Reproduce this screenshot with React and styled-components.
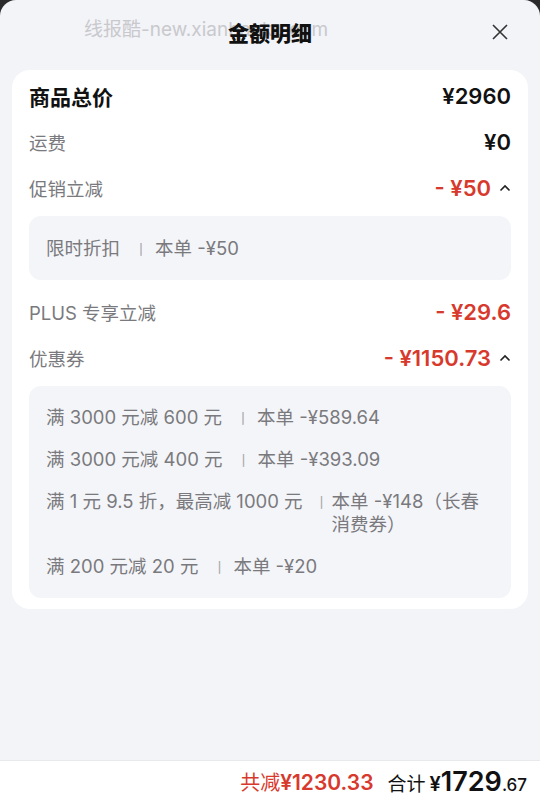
import React from "react";
import styled, { createGlobalStyle } from "styled-components";

const GlobalStyle = createGlobalStyle`
  html, body {
    margin: 0;
    padding: 0;
    background: #2a2a2c;
  }
  body {
    font-family: Inter, "Noto Sans CJK SC", sans-serif;
  }
`;

const RED = "#d8392d";

const Sheet = styled.div`
  position: relative;
  height: 802px;
  display: flex;
  flex-direction: column;
  background: #f3f4f8;
  border-radius: 16px 16px 0 0;
  overflow: hidden;
`;

const Header = styled.div`
  position: relative;
  height: 70px;
  display: flex;
  align-items: flex-start;
  justify-content: center;
  padding-top: 17px;
  box-sizing: border-box;
`;

const Watermark = styled.div`
  position: absolute;
  left: 84px;
  top: 14px;
  font-size: 19px;
  color: #c9c9cd;
  white-space: nowrap;
`;

const Title = styled.h1`
  position: relative;
  margin: 0;
  font-size: 21px;
  line-height: 34px;
  font-weight: 800;
  color: #111;
`;

const CloseButton = styled.button`
  position: absolute;
  right: 30px;
  top: 22px;
  width: 20px;
  height: 20px;
  padding: 0;
  border: none;
  background: transparent;
  display: flex;
  align-items: center;
  justify-content: center;
`;

const Card = styled.div`
  margin: 0 12px;
  background: #fff;
  border-radius: 18px;
  padding: 3px 17px 11px;
`;

const Row = styled.div`
  height: 46px;
  display: flex;
  align-items: center;
  justify-content: space-between;
`;

const Label = styled.span`
  font-size: ${(p) => (p.strong ? "21px" : "18.5px")};
  font-weight: ${(p) => (p.strong ? 700 : 400)};
  color: ${(p) => (p.strong ? "#111" : "#7a7a7e")};
`;

const Amount = styled.span`
  display: flex;
  align-items: center;
  gap: 8px;
  font-size: 22px;
  font-weight: 600;
  color: ${(p) => (p.red ? RED : "#111")};
`;

const Detail = styled.div`
  margin: 5px 0 9px;
  background: #f4f5f8;
  border-radius: 12px;
  padding: ${(p) => (p.multi ? "20px 17px 20px" : "21px 17px 20px")};
  display: flex;
  flex-direction: column;
  gap: 19px;

  &:last-child {
    margin-bottom: 0;
  }
`;

const DetailLine = styled.div`
  display: flex;
  align-items: flex-start;
  font-size: 18.5px;
  line-height: 23px;
  color: #7a7a7e;
`;

const DetailName = styled.span`
  white-space: nowrap;
`;

const Sep = styled.span`
  margin: 0 ${(p) => (p.tight ? "3px" : "7px")} 0 ${(p) => (p.tight ? "12px" : "14px")};
  color: #a8a8ad;
  font-size: 14px;
`;

const DetailValue = styled.span`
  flex: 1;
`;

const Footer = styled.div`
  margin-top: auto;
  height: 41px;
  background: #fff;
  border-top: 1px solid #e8e9ec;
  display: flex;
  align-items: center;
  justify-content: flex-end;
  padding-right: 13px;
  gap: 14px;
`;

const Saved = styled.span`
  font-size: 20px;
  color: ${RED};
`;

const SavedNum = styled.span`
  font-size: 21px;
  font-weight: 600;
`;

const Total = styled.span`
  display: flex;
  align-items: baseline;
  color: #111;
  font-size: 19px;
`;

const Yen = styled.span`
  margin-left: 4px;
  font-size: 20px;
  font-weight: 600;
`;

const TotalBig = styled.span`
  font-size: 27px;
  font-weight: 600;
`;

const TotalSmall = styled.span`
  font-size: 17px;
  font-weight: 500;
`;

const Chevron = () => (
  <svg width="12" height="8" viewBox="0 0 12 8">
    <path d="M1.5 6.5 L6 2 L10.5 6.5" fill="none" stroke="#222" strokeWidth="1.6" />
  </svg>
);

const coupons = [
  ["满 3000 元减 600 元", "本单 -¥589.64"],
  ["满 3000 元减 400 元", "本单 -¥393.09"],
  ["满 1 元 9.5 折，最高减 1000 元", "本单 -¥148（长春消费券）", true],
  ["满 200 元减 20 元", "本单 -¥20"],
];

export default function App() {
  return (
    <>
      <GlobalStyle />
      <Sheet>
        <Header>
          <Watermark>线报酷-new.xianbaoku.com</Watermark>
          <Title>金额明细</Title>
          <CloseButton aria-label="关闭">
            <svg width="18" height="18" viewBox="0 0 18 18">
              <path d="M2 2 L16 16 M16 2 L2 16" stroke="#333" strokeWidth="1.6" />
            </svg>
          </CloseButton>
        </Header>
        <Card>
          <Row>
            <Label strong>商品总价</Label>
            <Amount>¥2960</Amount>
          </Row>
          <Row>
            <Label>运费</Label>
            <Amount>¥0</Amount>
          </Row>
          <Row>
            <Label>促销立减</Label>
            <Amount red>
              - ¥50
              <Chevron />
            </Amount>
          </Row>
          <Detail>
            <DetailLine>
              <DetailName>限时折扣</DetailName>
              <Sep>丨</Sep>
              <DetailValue>本单 -¥50</DetailValue>
            </DetailLine>
          </Detail>
          <Row>
            <Label>PLUS 专享立减</Label>
            <Amount red>- ¥29.6</Amount>
          </Row>
          <Row>
            <Label>优惠券</Label>
            <Amount red>
              - ¥1150.73
              <Chevron />
            </Amount>
          </Row>
          <Detail multi>
            {coupons.map(([name, value, tight]) => (
              <DetailLine key={name}>
                <DetailName>{name}</DetailName>
                <Sep tight={tight}>丨</Sep>
                <DetailValue>{value}</DetailValue>
              </DetailLine>
            ))}
          </Detail>
        </Card>
        <Footer>
          <Saved>
            共减<SavedNum>¥1230.33</SavedNum>
          </Saved>
          <Total>
            合计<Yen>¥</Yen>
            <TotalBig>1729</TotalBig>
            <TotalSmall>.67</TotalSmall>
          </Total>
        </Footer>
      </Sheet>
    </>
  );
}
